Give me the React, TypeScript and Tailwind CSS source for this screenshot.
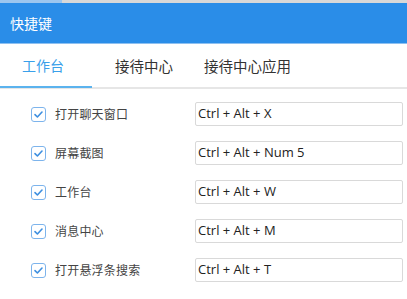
import React from "react";

const rows = [
  { label: "打开聊天窗口", keys: "Ctrl + Alt + X" },
  { label: "屏幕截图", keys: "Ctrl + Alt + Num 5" },
  { label: "工作台", keys: "Ctrl + Alt + W" },
  { label: "消息中心", keys: "Ctrl + Alt + M" },
  { label: "打开悬浮条搜索", keys: "Ctrl + Alt + T" },
];

const CheckBox = () => (
  <div className="w-[15px] h-[15px] rounded-[3px] border-[1.5px] border-[#7db4ec] bg-white flex items-center justify-center">
    <svg width="11" height="11" viewBox="0 0 11 11" fill="none">
      <path d="M2 5.6L4.4 8L9 3" stroke="#3d8fe0" strokeWidth="1.6" strokeLinecap="round" strokeLinejoin="round" />
    </svg>
  </div>
);

export default function App() {
  return (
    <div className="w-[407px] h-[299px] bg-white overflow-hidden" style={{ fontFamily: '"Microsoft YaHei", "Noto Sans CJK SC", sans-serif' }}>
      {/* top strip */}
      <div className="h-[3px] bg-[#d8d8d8] flex">
        <div className="w-[62px] bg-[#9cc6ef]" />
      </div>
      {/* header */}
      <div className="h-[41px] bg-[#2a8de8] border-b border-[#8ec0f0] flex items-center pl-[10px]">
        <span className="text-white text-[14px]">快捷键</span>
      </div>
      {/* tabs */}
      <div className="h-[45px] flex items-center border-b-2 border-[#e6e6e6]">
        <div className="w-[92px] h-full flex items-center justify-center text-[14px] text-[#3aa0ea] border-b-2 border-[#5bb3ee] -mb-[2px] pr-[6px]">
          工作台
        </div>
        <div className="ml-[23px] text-[14.5px] text-[#333]">接待中心</div>
        <div className="ml-[31px] text-[14.5px] text-[#333]">接待中心应用</div>
      </div>
      {/* rows */}
      <div className="pt-[13px] flex flex-col gap-[15px]">
        {rows.map((r) => (
          <div key={r.label} className="flex items-center h-[24px]">
            <div className="pl-[31px] w-[195px] flex items-center">
              <CheckBox />
              <span className="ml-[9px] text-[12px] tracking-[0.2px] text-[#444]">{r.label}</span>
            </div>
            <div className="w-[208px] h-[24px] border border-[#d9d9d9] rounded-[2px] flex items-center pl-[2px] text-[13px] text-[#222]" style={{ fontFamily: '"Open Sans", "Noto Sans", sans-serif' }}>
              {r.keys}
            </div>
          </div>
        ))}
      </div>
    </div>
  );
}
